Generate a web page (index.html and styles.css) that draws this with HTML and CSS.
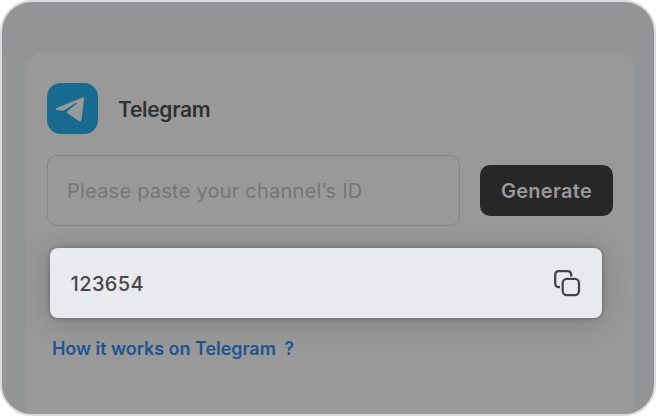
FILE: index.html
```html
<!DOCTYPE html>
<html lang="en">
<head>
<meta charset="utf-8">
<title>Telegram</title>
<link rel="stylesheet" href="styles.css">
</head>
<body>
<main class="frame">
  <div class="neighbor"></div>
  <section class="card">
    <header class="heading">
      <svg class="logo" viewBox="0 0 51 51" aria-hidden="true">
        <rect width="51" height="51" rx="14" fill="#186a91"/>
        <path d="M9.3 25.3 35.2 14.5Q37.3 13.8 37.1 16L34.4 37Q33.8 39.3 31.7 38L20 30.1Q19.2 29.3 20 28.4L29.7 20.5Q30.3 19.4 29 19.8L17.1 27.2Q15.8 28.1 14.2 27.7L9.4 26.7Q8.2 26 9.3 25.3Z" fill="#999"/>
      </svg>
      <h1 class="title">Telegram</h1>
    </header>
    <div class="entry">
      <div class="field">Please paste your channel’s ID</div>
      <button class="generate">Generate</button>
    </div>
    <div class="result">
      <span class="code">123654</span>
      <svg class="copy" viewBox="0 0 28 28" aria-hidden="true">
        <path d="M18.2 7.6V6Q18.2 2.2 14.4 2.2H6Q2.2 2.2 2.2 6V14.3Q2.2 18.1 6 18.1H7"/>
        <rect x="9.7" y="9.8" width="16.3" height="16.3" rx="4.2"/>
      </svg>
    </div>
    <a class="help">How it works on Telegram <span class="mark">?</span></a>
  </section>
</main>
</body>
</html>
```
FILE: styles.css
```css
* { box-sizing: border-box; }
body { margin: 0; background: #fff; font-family: Inter, sans-serif; }
.frame {
  display: flex;
  gap: 21px;
  width: 656px;
  height: 416px;
  padding-top: 50px;
  border: 2px solid #dbdce0;
  border-radius: 32px;
  background: #929496;
  overflow: hidden;
}
.neighbor { width: 4px; height: 420px; border-radius: 0 4px 0 0; background: #979797; flex: none; }
.card {
  width: 607px;
  height: 420px;
  flex: none;
  padding: 31px 21px 31px 20px;
  border-radius: 16px;
  background: #999;
}
.heading { display: flex; align-items: center; gap: 20px; height: 51px; }
.logo { width: 51px; height: 51px; }
.title { margin: 0; padding-top: 2px; font-size: 21px; font-weight: 600; line-height: 26px; letter-spacing: -.3px; color: #303132; }
.entry { display: flex; align-items: center; justify-content: space-between; height: 71px; margin-top: 21px; }
.field {
  width: 413px;
  height: 71px;
  padding-left: 19px;
  border: 1px solid #848484;
  border-radius: 10px;
  font-size: 20px;
  line-height: 70px;
  letter-spacing: .23px;
  color: #747677;
}
.generate {
  width: 133px;
  height: 51px;
  padding: 0;
  border: 0;
  border-radius: 10px;
  background: #272727;
  color: #999;
  font: 600 20px Inter, sans-serif;
  letter-spacing: .3px;
}
.result {
  display: flex;
  align-items: center;
  justify-content: space-between;
  width: 552px;
  height: 70px;
  margin: 22px 0 0 3px;
  padding: 0 21.5px 0 20.5px;
  border-radius: 8px;
  background: #e9eaee;
  box-shadow: 0 0 4px rgba(0, 0, 0, .3), 0 3px 28px rgba(0, 0, 0, .2);
}
.code { padding-top: 1px; font-size: 20px; font-weight: 500; letter-spacing: .4px; color: #484848; }
.copy { width: 28px; height: 28px; fill: none; stroke: #434445; stroke-width: 2.3; stroke-linecap: butt; }
.help { display: block; margin: 19px 0 0 5px; font-size: 18px; font-weight: 600; line-height: 24px; letter-spacing: -.05px; color: #205491; }
.mark { margin-left: 4px; }
```
